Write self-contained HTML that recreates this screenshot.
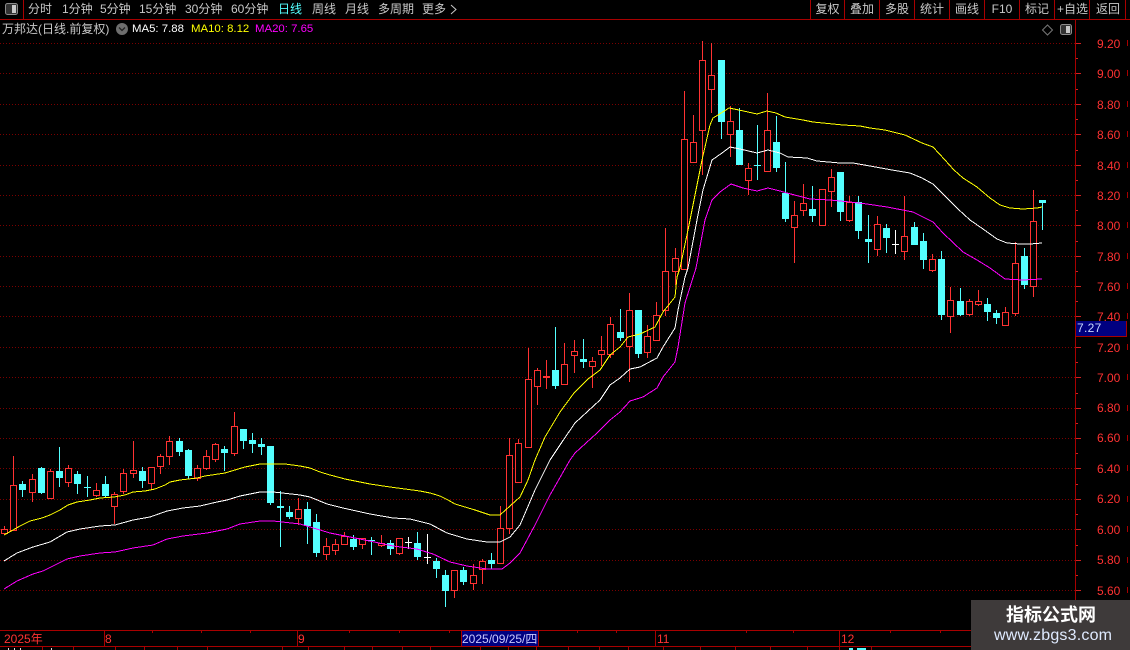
<!DOCTYPE html>
<html><head><meta charset="utf-8">
<style>
html,body{margin:0;padding:0;background:#000;}
#p{position:relative;width:1130px;height:650px;overflow:hidden;background:#000;font-family:"Liberation Sans","Noto Sans CJK SC",sans-serif;font-size:12px;}
#p span{position:absolute;white-space:nowrap;line-height:14px;}
.t{color:#c8c8c8;top:2px;}
.b{color:#c8c8c8;top:2px;text-align:center;}
.y{color:#ff3232;left:1097px;font-size:12px;}
.d{color:#ff3232;top:632px;}
svg{position:absolute;left:0;top:0;}
</style></head><body>
<div id="p">
<svg id="s" width="1130" height="650" viewBox="0 0 1130 650"></svg>

<span class="t" style="left:28px">分时</span>
<span class="t" style="left:62px">1分钟</span>
<span class="t" style="left:100px">5分钟</span>
<span class="t" style="left:139px">15分钟</span>
<span class="t" style="left:185px">30分钟</span>
<span class="t" style="left:231px">60分钟</span>
<span class="t" style="left:278px;color:#54ffff">日线</span>
<span class="t" style="left:312px">周线</span>
<span class="t" style="left:345px">月线</span>
<span class="t" style="left:378px">多周期</span>
<span class="t" style="left:422px">更多</span>
<span class="b" style="left:811px;width:33px">复权</span>
<span class="b" style="left:845px;width:34px">叠加</span>
<span class="b" style="left:880px;width:34px">多股</span>
<span class="b" style="left:915px;width:34px">统计</span>
<span class="b" style="left:950px;width:34px">画线</span>
<span class="b" style="left:985px;width:34px">F10</span>
<span class="b" style="left:1020px;width:34px">标记</span>
<span class="b" style="left:1055px;width:35px">+自选</span>
<span class="b" style="left:1091px;width:34px">返回</span>

<span style="left:2px;top:22px;color:#c8c8c8">万邦达(日线.前复权)</span>
<span style="left:132px;top:22px;color:#fff;font-size:11.4px">MA5: 7.88</span>
<span style="left:191px;top:22px;color:#ff0;font-size:11.4px">MA10: 8.12</span>
<span style="left:255px;top:22px;color:#f0f;font-size:11.4px">MA20: 7.65</span>

<span class="y" style="top:37px">9.20</span>
<span class="y" style="top:67px">9.00</span>
<span class="y" style="top:98px">8.80</span>
<span class="y" style="top:128px">8.60</span>
<span class="y" style="top:159px">8.40</span>
<span class="y" style="top:189px">8.20</span>
<span class="y" style="top:219px">8.00</span>
<span class="y" style="top:250px">7.80</span>
<span class="y" style="top:280px">7.60</span>
<span class="y" style="top:310px">7.40</span>
<span class="y" style="top:341px">7.20</span>
<span class="y" style="top:371px">7.00</span>
<span class="y" style="top:401px">6.80</span>
<span class="y" style="top:431px">6.60</span>
<span class="y" style="top:462px">6.40</span>
<span class="y" style="top:492px">6.20</span>
<span class="y" style="top:523px">6.00</span>
<span class="y" style="top:553px">5.80</span>
<span class="y" style="top:584px">5.60</span>
<span style="left:1077px;top:321px;color:#c8d8ff;letter-spacing:.3px">7.27</span>

<span class="d" style="left:4px">2025年</span>
<span class="d" style="left:105px">8</span>
<span class="d" style="left:298px">9</span>
<span class="d" style="left:462px;color:#c8c8ff">2025/09/25/四</span>
<span class="d" style="left:657px">11</span>
<span class="d" style="left:841px">12</span>

<div style="position:absolute;left:971px;top:600px;width:159px;height:50px;background:#3e3a3a"></div>
<span style="left:1006px;top:605px;color:#fff;font-size:18px;font-weight:bold;line-height:20px">指标公式网</span>
<span style="left:994px;top:627px;color:#dfeaff;font-size:16px;letter-spacing:.2px;line-height:18px">www.zbgs3.com</span>
</div>
<script>
var R="#ff3232",C="#54ffff",W="#ffffff";
var D=[[4,526,529,533,535,R],[13,456,485,530,530,R],[22,481,484,490,497,C],[32,474,479,492,502,R],[41,467,468,493,494,C],[50,469,471,498,499,R],[59,447,471,478,487,C],[68,465,468,482,487,R],[77,471,474,484,494,C],[87,476,487,487,497,C],[96,483,490,495,497,R],[105,476,484,496,497,C],[114,492,494,506,524,R],[123,469,473,491,494,R],[133,441,470,473,478,R],[142,467,471,481,488,C],[151,467,467,483,489,R],[160,454,456,466,474,R],[169,436,441,456,465,R],[179,438,441,452,456,C],[188,449,450,476,479,C],[197,465,468,478,481,R],[206,450,456,468,470,R],[215,443,444,459,462,R],[224,446,449,453,471,C],[234,412,426,453,456,R],[243,429,429,441,449,C],[252,433,440,444,453,C],[261,438,444,447,455,C],[270,446,446,503,505,C],[280,491,506,508,547,C],[289,506,512,517,519,C],[298,498,509,518,525,R],[307,502,509,526,544,C],[316,514,522,553,557,C],[326,538,546,554,560,R],[335,539,544,550,555,R],[344,532,536,544,544,R],[353,535,539,547,550,C],[362,538,538,544,549,R],[371,537,540,541,555,C],[381,535,543,545,547,R],[390,540,543,549,555,C],[399,538,538,553,555,R],[408,537,542,542,549,W],[417,532,543,557,560,C],[427,534,557,557,564,W],[436,558,561,569,578,C],[445,570,575,591,607,C],[454,570,570,590,598,R],[463,567,570,582,585,C],[473,564,575,583,590,R],[482,559,561,569,584,R],[491,553,560,564,569,C],[500,506,528,563,563,R],[509,438,455,528,534,R],[518,439,443,482,483,R],[528,348,379,447,447,R],[537,368,370,386,405,R],[546,360,376,378,389,R,1],[555,327,370,386,389,C],[564,343,364,384,384,R],[574,340,351,355,373,R],[583,339,359,362,368,C],[592,357,361,366,388,R],[601,336,350,354,366,R],[610,317,324,354,358,R],[620,309,332,338,341,C],[629,293,310,346,382,R],[638,310,310,354,358,C],[647,325,336,352,358,R],[656,302,315,340,340,R],[665,228,271,310,316,R],[675,248,258,271,285,R],[684,91,139,269,269,R],[693,115,142,162,162,R],[702,41,60,130,175,R],[711,43,75,89,113,R],[721,60,60,122,139,C],[730,106,121,134,157,R],[739,108,130,165,165,C],[748,163,168,180,195,R],[757,125,165,165,180,C],[767,93,130,171,171,R],[776,116,142,168,172,C],[785,162,193,219,222,C],[794,201,215,227,263,R],[803,184,203,210,216,R],[812,186,209,216,222,C],[822,189,189,225,225,R],[831,169,177,191,207,R],[840,172,172,212,221,C],[849,196,202,220,222,R],[858,196,202,231,239,C],[868,215,239,242,263,C],[877,216,224,249,256,R],[886,224,228,238,253,C],[895,230,244,244,254,W],[904,196,236,251,260,R],[914,222,227,245,245,C],[923,233,241,260,269,C],[932,254,259,270,272,R],[941,251,259,315,320,C],[950,287,300,316,333,R],[960,288,301,315,316,C],[969,299,301,314,316,R],[978,290,301,304,306,R],[987,298,304,312,321,C],[996,310,313,318,324,C],[1005,307,312,325,326,R],[1015,242,263,313,316,R],[1024,248,256,285,289,C],[1033,190,221,286,297,R],[1042,200,200,203,230,C]];
var Y="4,535 13,530 20,526 30,521 42,518 50,515 60,510 68,505 77,502 90,500 100,498 114,497 125,495 133,492 145,491 155,489 165,485 170,482 180,480 197,478 205,476 225,473 235,470 245,467 260,464 285,464 300,466 310,468 320,472 330,475 345,479 370,484 390,487 420,491 430,493 440,496 448,500 455,504 465,507 475,510 490,515 500,515 510,506 520,497 528,480 535,460 545,437 560,412 574,393 588,379 600,370 610,355 620,347 628,337 640,334 655,327 663,312 675,297 677,277 680,268 688,230 698,180 702,160 710,125 713,118 718,115 729,108 739,110 748,112 757,114 767,111 776,113 785,117 803,120 813,122 843,125 860,126 870,128 885,130 905,135 922,143 933,147 945,160 954,170 963,178 977,187 990,198 1000,205 1010,208 1023,209 1037,208 1042,207";
var H="4,561 17,553 33,547 50,542 67,532 80,529 100,526 115,525 133,520 150,517 167,511 183,508 200,506 217,502 227,500 240,496 260,492 273,492 300,495 310,497 327,504 343,508 370,514 393,518 410,519 430,524 447,533 467,539 487,542 500,542 510,537 520,525 535,490 550,460 562,442 575,423 600,400 610,385 620,378 630,369 640,367 657,358 663,347 675,328 678,310 685,277 688,268 697,220 703,190 712,160 722,153 730,147 740,149 757,153 768,150 780,153 788,157 807,158 817,161 840,163 853,163 870,166 892,170 910,173 922,178 933,184 947,198 958,209 970,220 983,229 997,239 1007,243 1020,244 1030,244 1042,243";
var M="4,589 17,581 33,574 43,571 67,559 80,556 100,553 115,552 133,548 153,545 167,539 183,536 207,533 217,531 227,529 240,524 260,521 273,521 300,524 310,527 330,533 360,539 393,546 417,549 433,554 450,562 467,566 487,569 502,569 510,563 520,553 535,525 550,495 570,460 575,453 597,433 610,420 620,412 630,401 643,397 657,388 663,377 675,362 678,347 685,303 696,268 705,220 712,200 720,192 731,184 743,188 757,191 768,188 780,191 787,193 810,199 830,200 850,202 867,204 887,207 913,212 933,222 943,233 963,252 977,260 990,268 1005,279 1023,280 1042,279";
var o='<g shape-rendering="crispEdges">';
var L="#a80000",G="#7a0000";
var g=[43,73,104,134,165,195,225,256,286,316,347,377,408,438,468,499,529,560,590];
g.forEach(function(y){
 o+='<path d="M0 '+(y+.5)+'H1075" stroke="'+G+'" stroke-dasharray="1 2"/>';
 o+='<path d="M1075 '+(y+.5)+'H1081" stroke="#d02020"/>';
});
for(var i=0;i<g.length-1;i++){var m=Math.round((g[i]+g[i+1])/2)+.5;o+='<path d="M1075 '+m+'H1078" stroke="#d02020"/>';}
for(var i=0;i<g.length;i++){o+='<path d="M1127.5 '+(g[i]-3)+'v6" stroke="#a80000"/>';}
/* frames */
o+='<rect x="0" y="19" width="1130" height="1" fill="'+L+'"/>';
o+='<rect x="0" y="630" width="1130" height="1" fill="'+L+'"/>';
o+='<rect x="0" y="646" width="1130" height="1" fill="'+L+'"/>';
o+='<rect x="1075" y="19" width="1" height="611" fill="'+L+'"/>';
o+='<rect x="23" y="0" width="1" height="19" fill="'+L+'"/>';
[810,844,879,914,949,984,1019,1054,1089,1125].forEach(function(x){o+='<rect x="'+x+'" y="0" width="1" height="19" fill="'+L+'"/>';});
[104,297,461,538,655,839].forEach(function(x){o+='<rect x="'+x+'" y="630" width="1" height="16" fill="'+L+'"/>';});
[152,201,250,349,399,449,577,616,746,793,890,940].forEach(function(x){o+='<rect x="'+x+'" y="630" width="1" height="3" fill="'+L+'"/>';});
[42,73,115,144,177,207,282,308,344,372,402,430,480,508,536,568,599,628,663,700,735,770,807,839,871].forEach(function(x){o+='<rect x="'+x+'" y="646" width="1" height="4" fill="'+L+'"/>';});
o+='<rect x="462" y="631" width="76" height="15" fill="#000080"/>';
o+='<rect x="1076" y="321" width="50" height="15" fill="#000080"/><rect x="1075" y="336" width="52" height="1" fill="'+L+'"/><rect x="1126" y="321" width="1" height="15" fill="'+L+'"/>';
/* bottom strip remnants */
o+='<rect x="8" y="648" width="1" height="2" fill="#ddd"/><rect x="14" y="648" width="1" height="2" fill="#ddd"/><rect x="20" y="648" width="1" height="2" fill="#ddd"/><rect x="51" y="648" width="1" height="2" fill="#ddd"/><rect x="849" y="648" width="4" height="2" fill="'+C+'"/><rect x="857" y="648" width="9" height="2" fill="'+C+'"/>';
/* candles */
D.forEach(function(d){
 var x=d[0],w=x+.5,c=d[5];
 if(c==R&&!d[6]){
  if(d[1]<d[2])o+='<path d="M'+w+' '+d[1]+'V'+d[2]+'" stroke="'+c+'"/>';
  if(d[4]>d[3])o+='<path d="M'+w+' '+d[3]+'V'+d[4]+'" stroke="'+c+'"/>';
  o+='<rect x="'+(x-2.5)+'" y="'+(d[2]+.5)+'" width="6" height="'+(d[3]-d[2])+'" fill="#000" stroke="'+c+'"/>';
 }else{
  o+='<path d="M'+w+' '+d[1]+'V'+d[4]+'" stroke="'+c+'"/>';
  if(d[3]==d[2])o+='<rect x="'+(x-3)+'" y="'+d[2]+'" width="7" height="1" fill="'+c+'"/>';
  else o+='<rect x="'+(x-3)+'" y="'+d[2]+'" width="7" height="'+(d[3]-d[2])+'" fill="'+c+'"/>';
 }
});
o+='</g>';
o+='<g fill="none" stroke-width="1" shape-rendering="crispEdges"><polyline points="'+M+'" stroke="#ff00ff"/><polyline points="'+H+'" stroke="#ffffff"/><polyline points="'+Y+'" stroke="#ffff00"/></g>';
/* icons */
o+='<rect x="5.5" y="3.5" width="12" height="11" rx="2" fill="#333" stroke="#8c8c8c"/><rect x="12" y="5" width="4" height="8" fill="#c8c8c8"/>';
o+='<rect x="1060.5" y="24.5" width="11" height="10" rx="2" fill="#333" stroke="#8c8c8c"/><rect x="1066" y="26" width="4" height="7" fill="#c8c8c8"/>';
o+='<path d="M1047.5 25L1052.5 30L1047.5 35L1042.5 30Z" fill="none" stroke="#787878"/>';
o+='<circle cx="122" cy="29" r="6" fill="#6e6e6e"/><path d="M119 27.5L122 30.5L125 27.5" fill="none" stroke="#222" stroke-width="1.3"/>';
o+='<path d="M451 5L456 9.5L451 14" fill="none" stroke="#c8c8c8"/>';
document.getElementById("s").innerHTML=o;
</script>
</body></html>
